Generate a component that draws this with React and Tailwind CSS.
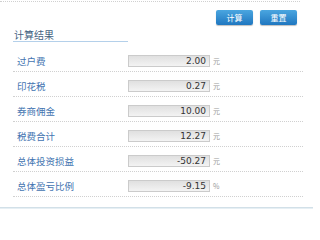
const rows = [
  { label: "过户费", value: "2.00", unit: "元" },
  { label: "印花税", value: "0.27", unit: "元" },
  { label: "券商佣金", value: "10.00", unit: "元" },
  { label: "税费合计", value: "12.27", unit: "元" },
  { label: "总体投资损益", value: "-50.27", unit: "元" },
  { label: "总体盈亏比例", value: "-9.15", unit: "%" },
];

const cjk = { fontFamily: '"Noto Sans CJK SC", "Noto Sans", sans-serif' };

export default function App() {
  return (
    <div className="w-[313px] h-[209px] bg-white overflow-hidden flex flex-col" style={cjk}>
      {/* top dotted rule */}
      <div className="mt-[1px] w-[300px] border-t border-dotted border-[#d0d0d0]" />

      {/* buttons */}
      <div className="mt-[8px] flex justify-end gap-[7px] pr-[16px]">
        <button className="w-[37px] h-[15px] rounded-[2px] bg-gradient-to-b from-[#4aa6e0] to-[#1f77c0] text-white text-[8px] leading-[15px] shadow-[0_1px_1px_rgba(0,0,0,0.25)]">
          计算
        </button>
        <button className="w-[37px] h-[15px] rounded-[2px] bg-gradient-to-b from-[#4aa6e0] to-[#1f77c0] text-white text-[8px] leading-[15px] shadow-[0_1px_1px_rgba(0,0,0,0.25)]">
          重置
        </button>
      </div>

      {/* title */}
      <div className="ml-[13px] mt-[2px] w-[115px] border-b border-[#b4d0ea] pl-[1px] h-[15px] flex items-end">
        <span className="text-[10px] leading-[13px] text-[#44627f]">计算结果</span>
      </div>

      {/* result rows */}
      <div className="ml-[13px] mt-[5px] w-[290px] flex flex-col">
        {rows.map((r) => (
          <div
            key={r.label}
            className="h-[25px] pt-[4px] flex items-center border-b border-dotted border-[#d0d0d0]"
          >
            <div className="w-[115px] pl-[4px] text-[9.5px] text-[#4273b0]">{r.label}</div>
            <div
              className="w-[82px] h-[12px] border border-[#cbcbcb] bg-gradient-to-b from-[#e0e0e0] to-[#f3f3f3] text-right pr-[3px] text-[9px] leading-[11px] text-[#333]"
              style={{ fontFamily: '"DejaVu Sans", Verdana, sans-serif' }}
            >
              {r.value}
            </div>
            <span className="ml-[3px] text-[7px] text-[#999]">{r.unit}</span>
          </div>
        ))}
      </div>

      {/* bottom band */}
      <div className="mt-auto h-[2px] bg-[#e6eff4] border-t border-[#d2e0e8]" />
    </div>
  );
}
